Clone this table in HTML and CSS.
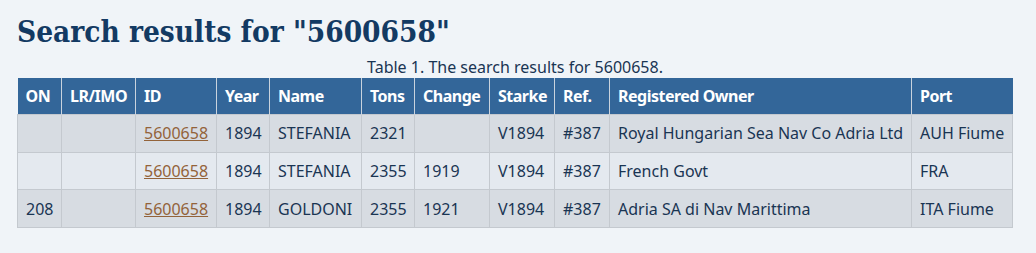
FILE: index.html
```html
<!DOCTYPE html>
<html lang="en">
<head>
<meta charset="utf-8">
<title>Search results</title>
<link rel="stylesheet" href="styles.css">
</head>
<body>
<main class="page">
  <h1 class="title">Search results for "5600658"</h1>
  <table class="results">
    <caption>Table 1. The search results for 5600658.</caption>
    <colgroup>
      <col class="c-on"><col class="c-lr"><col class="c-id"><col class="c-year"><col class="c-name"><col class="c-tons"><col class="c-change"><col class="c-starke"><col class="c-ref"><col class="c-owner"><col class="c-port">
    </colgroup>
    <thead>
      <tr><th>ON</th><th>LR/IMO</th><th>ID</th><th>Year</th><th>Name</th><th>Tons</th><th>Change</th><th>Starke</th><th>Ref.</th><th>Registered Owner</th><th>Port</th></tr>
    </thead>
    <tbody>
      <tr><td></td><td></td><td><a href="#">5600658</a></td><td>1894</td><td>STEFANIA</td><td>2321</td><td></td><td>V1894</td><td>#387</td><td>Royal Hungarian Sea Nav Co Adria Ltd</td><td>AUH Fiume</td></tr>
      <tr><td></td><td></td><td><a href="#">5600658</a></td><td>1894</td><td>STEFANIA</td><td>2355</td><td>1919</td><td>V1894</td><td>#387</td><td>French Govt</td><td>FRA</td></tr>
      <tr><td>208</td><td></td><td><a href="#">5600658</a></td><td>1894</td><td>GOLDONI</td><td>2355</td><td>1921</td><td>V1894</td><td>#387</td><td>Adria SA di Nav Marittima</td><td>ITA Fiume</td></tr>
    </tbody>
  </table>
</main>
</body>
</html>
```

FILE: styles.css
```css
html, body {
  margin: 0;
  background: #f0f4f8;
}
body {
  font-family: "Noto Sans", "DejaVu Sans", sans-serif;
  color: #1a3553;
}
.page {
  padding: 12px 24px 0 17px;
}
.title {
  font-family: "DejaVu Serif Condensed", "DejaVu Serif", serif;
  font-stretch: condensed;
  font-weight: bold;
  font-size: 29.5px;
  line-height: 40px;
  color: #133a63;
  margin: 0 0 5px 0;
}
.results {
  width: 995px;
  border-collapse: collapse;
  font-size: 16px;
  table-layout: fixed;
}
.results caption {
  font-size: 16px;
  line-height: 20px;
  color: #1a3553;
  padding-bottom: 1px;
}
.results th {
  background: #336699;
  color: #ffffff;
  font-weight: bold;
  text-align: left;
  height: 36px;
  padding: 0 8px;
  border-left: 1px solid #c9d3de;
  white-space: nowrap;
  letter-spacing: -0.5px;
}
.results th:first-child { border-left: none; }
.results td {
  height: 36.7px;
  padding: 0 8px;
  border: 1px solid #c4c9cf;
  white-space: nowrap;
}
.results tbody tr:nth-child(odd) td { background: #d7dce2; }
.results tbody tr:nth-child(even) td { background: #e4e9ef; }
.results a {
  color: #93633a;
  text-decoration: underline;
}
.c-on { width: 44px; }
.c-lr { width: 74px; }
.c-id { width: 81px; }
.c-year { width: 53px; }
.c-name { width: 92px; }
.c-tons { width: 53px; }
.c-change { width: 75px; }
.c-starke { width: 65px; }
.c-ref { width: 55px; }
.c-owner { width: 302px; }
.c-port { width: 101px; }
```
